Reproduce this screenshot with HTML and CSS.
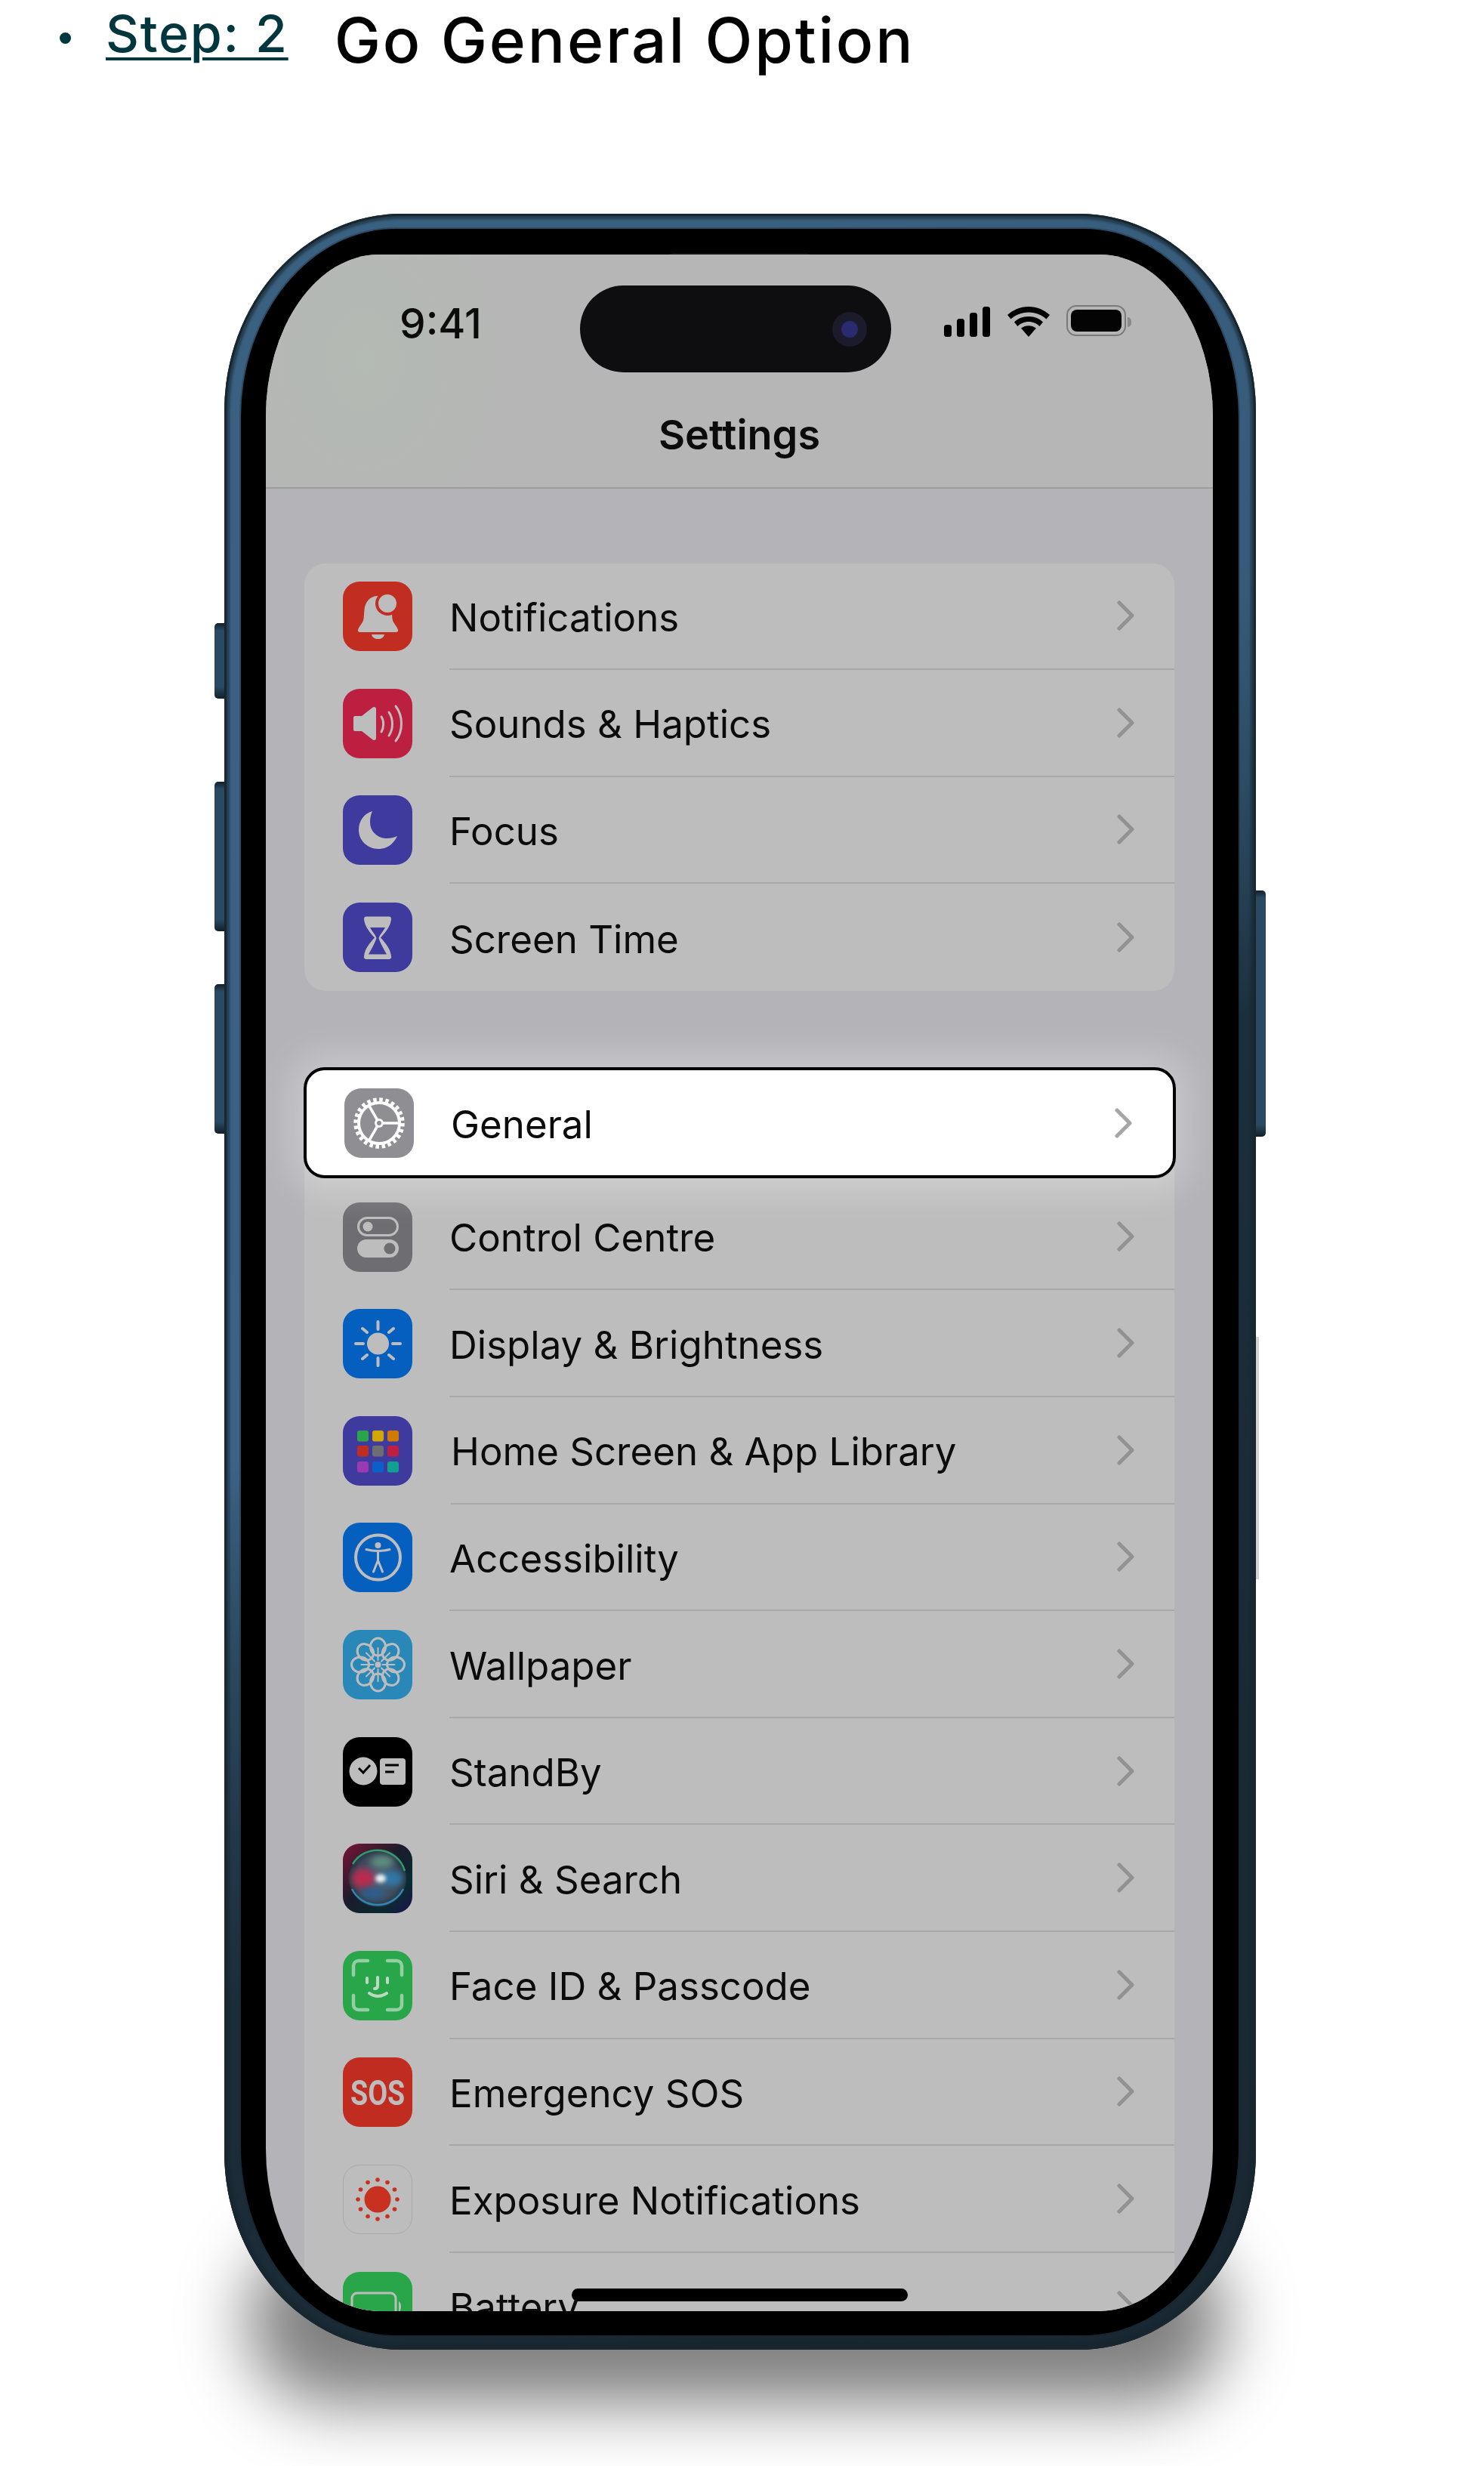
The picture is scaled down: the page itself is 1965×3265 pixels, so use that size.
FILE: index.html
```html
<!DOCTYPE html>
<html lang="en">
<head>
    <meta charset="UTF-8">
    <meta name="viewport" content="width=device-width, initial-scale=1.0">
    <title>Step 2 - Go General Option</title>
    <link rel="stylesheet" href="styles.css">
</head>
<body>

<svg class="defs" width="0" height="0">
    <symbol id="chev" viewBox="0 0 24 40">
        <path d="M3 3 L20 20 L3 37" fill="none" stroke-width="5" stroke-linecap="round" stroke-linejoin="round"/>
    </symbol>
    <radialGradient id="siriBall" cx="50%" cy="50%" r="50%">
        <stop offset="0" stop-color="#54677c"/>
        <stop offset="0.75" stop-color="#3d4a5c"/>
        <stop offset="1" stop-color="#24363f"/>
    </radialGradient>
    <linearGradient id="siriBg" x1="0" y1="0" x2="1" y2="1">
        <stop offset="0" stop-color="#7a1535"/>
        <stop offset="0.45" stop-color="#1b1b2c"/>
        <stop offset="0.75" stop-color="#0a2a30"/>
        <stop offset="1" stop-color="#1d1250"/>
    </linearGradient>
    <filter id="soft" x="-60%" y="-60%" width="220%" height="220%"><feGaussianBlur stdDeviation="4"/></filter>
    <filter id="softer" x="-60%" y="-60%" width="220%" height="220%"><feGaussianBlur stdDeviation="2.500"/></filter>
</svg>

<div class="step-line">
    <span class="bullet"></span>
    <a class="step-link" href="#">Step: 2</a>
    <h1 class="step-title">Go General Option</h1>
</div>

<div class="phone">
    <span class="btn btn-mute"></span>
    <span class="btn btn-up"></span>
    <span class="btn btn-down"></span>
    <span class="btn btn-power"></span>
    <span class="edge-strip"></span>

    <div class="bezel">
        <span class="speaker"></span>
        <div class="screen">

            <div class="nav">
                <div class="status">
                    <span class="time">9:41</span>
                    <div class="island"><span class="camera"></span></div>
                    <div class="status-icons">
                        <svg width="61" height="40" viewBox="0 0 61 40">
                            <rect x="0" y="24" width="10" height="16" rx="3.5"/>
                            <rect x="17" y="16" width="10" height="24" rx="3.5"/>
                            <rect x="34" y="8" width="10" height="32" rx="3.5"/>
                            <rect x="51" y="0" width="10" height="40" rx="3.5"/>
                        </svg>
                        <svg class="wifi" width="56" height="40" viewBox="0 0 56 40">
                            <path d="M28 40 L18 28.5 C24 24 32 24 38 28.5 Z"/>
                            <path d="M28 13 C36 13 43 16 47 20.5 L42.5 26 C39 22.5 34 20 28 20 C22 20 17 22.5 13.500 26 L9 20.500 C13 16 20 13 28 13 Z"/>
                            <path d="M28 0 C39 0 49 4.500 56 11 L51.500 16.500 C45.500 11 37.500 7.500 28 7.500 C18.500 7.500 10.500 11 4.500 16.500 L0 11 C7 4.500 17 0 28 0 Z"/>
                        </svg>
                        <div class="battery"><span class="battery-level"></span></div>
                        <span class="battery-nub"></span>
                    </div>
                </div>
                <div class="nav-title">Settings</div>
            </div>

            <div class="card card-first">
                <div class="row">
                    <span class="icon c-red">
                        <svg viewBox="0 0 92 92">
                            <path class="g" d="M46.500 19 C36 19 29.500 27 28.500 37 L27.500 49 C27 55 21 59 20 64 C19.500 66 21 67 23 67 H70 C72 67 73.500 66 73 64 C72 59 66 55 65.500 49 L64.500 37 C63.500 27 57 19 46.500 19 Z"/>
                            <path class="g" d="M38 70 H55 C54 74 51 76 46.500 76 C42 76 39 74 38 70 Z"/>
                            <circle cx="59" cy="29" r="16" fill="#c12d20"/>
                            <circle class="g" cx="59" cy="29" r="12"/>
                        </svg>
                    </span>
                    <div class="row-body"><span>Notifications</span><svg class="chev"><use href="#chev"/></svg></div>
                </div>
                <div class="row">
                    <span class="icon c-crimson">
                        <svg viewBox="0 0 92 92">
                            <path class="g" d="M16 36 H25 L39 25 C41.500 23 44 24 44 27 V65 C44 68 41.500 69 39 67 L25 56 H16 C14.500 56 14 55 14 54 V38 C14 37 14.500 36 16 36 Z"/>
                            <path class="l" d="M51 37 C54.500 42 54.500 51 51 57"/>
                            <path class="l" d="M61 31 C67 40 67 53 61 62"/>
                            <path class="l" d="M70 23 C80 36 80 56 70 69"/>
                        </svg>
                    </span>
                    <div class="row-body"><span>Sounds &amp; Haptics</span><svg class="chev"><use href="#chev"/></svg></div>
                </div>
                <div class="row">
                    <span class="icon c-indigo">
                        <svg viewBox="0 0 92 92">
                            <path class="g" d="M39 21 C28 24 21 34 21 46 C21 60 33 71 47 71 C58 71 67 65 72 54 C68 56 63 57 58 57 C45 57 36 47 36 36 C36 30 37 25 39 21 Z"/>
                        </svg>
                    </span>
                    <div class="row-body"><span>Focus</span><svg class="chev"><use href="#chev"/></svg></div>
                </div>
                <div class="row row-last">
                    <span class="icon c-indigo">
                        <svg viewBox="0 0 92 92">
                            <path class="g" d="M31 18.500 H61 A3 3 0 0 1 64 22 C63 32 56 40 50 46.500 C56 53 63 61 64 71 A3 3 0 0 1 61 75 H31 A3 3 0 0 1 28 71 C29 61 36 53 42 46.500 C36 40 29 32 28 22 A3 3 0 0 1 31 18.500 Z"/>
                            <path fill="#3f3a9e" d="M36 33 H56 C53 39 49 42 47.500 47 C49 52 53 60 58 68.500 H34 C39 60 43 52 44.500 47 C43 42 39 39 36 33 Z"/>
                        </svg>
                    </span>
                    <div class="row-body"><span>Screen Time</span><svg class="chev"><use href="#chev"/></svg></div>
                </div>
            </div>

            <div class="card card-second">
                <div class="row row-active">
                    <span class="icon c-gray">
                        <svg viewBox="0 0 92 92">
                            <circle cx="46" cy="46" r="30.500" fill="none" stroke="#fff" stroke-width="6.500" stroke-dasharray="4.400 3.585"/>
                            <circle cx="46" cy="46" r="27" fill="none" stroke="#fff" stroke-width="4"/>
                            <circle cx="46" cy="46" r="4.500" fill="none" stroke="#fff" stroke-width="3"/>
                            <path d="M50.500 46 H72 M43.700 42 L33 23.500 M43.700 50 L33 68.500" stroke="#fff" stroke-width="3.500" fill="none"/>
                        </svg>
                    </span>
                    <div class="row-body"><span>General</span><svg class="chev"><use href="#chev"/></svg></div>
                </div>
                <div class="row">
                    <span class="icon c-slate">
                        <svg viewBox="0 0 92 92">
                            <rect x="20.500" y="20.500" width="52" height="23" rx="11.500" fill="none" stroke="#bdbdbd" stroke-width="3"/>
                            <circle class="g" cx="33" cy="32" r="6.500"/>
                            <rect class="g" x="19" y="49" width="55" height="24" rx="12"/>
                            <circle cx="62" cy="61" r="7.500" fill="#6e6e72"/>
                        </svg>
                    </span>
                    <div class="row-body"><span>Control Centre</span><svg class="chev"><use href="#chev"/></svg></div>
                </div>
                <div class="row">
                    <span class="icon c-blue">
                        <svg viewBox="0 0 92 92">
                            <circle class="g" cx="46.500" cy="46" r="14.500"/>
                            <path class="l l4" d="M46.500 17 V27 M46.500 65 V75 M17 46 H27 M66 46 H76 M26 26 L32 31 M67 26 L61 31 M26 66 L32 61 M67 66 L61 61"/>
                        </svg>
                    </span>
                    <div class="row-body"><span>Display &amp; Brightness</span><svg class="chev"><use href="#chev"/></svg></div>
                </div>
                <div class="row row-shift">
                    <span class="icon c-indigo">
                        <svg viewBox="0 0 92 92">
                            <rect x="19" y="19" width="15" height="14.500" rx="3" fill="#2aa64a"/>
                            <rect x="39" y="19" width="15" height="14.500" rx="3" fill="#d0a800"/>
                            <rect x="59" y="19" width="15" height="14.500" rx="3" fill="#d07a00"/>
                            <rect x="19" y="39" width="15" height="14.500" rx="3" fill="#c02c20"/>
                            <rect x="39" y="39" width="15" height="14.500" rx="3" fill="#6e6e72"/>
                            <rect x="59" y="39" width="15" height="14.500" rx="3" fill="#bc1f40"/>
                            <rect x="19" y="60" width="15" height="14.500" rx="3" fill="#9a3ab0"/>
                            <rect x="39" y="60" width="15" height="14.500" rx="3" fill="#0a60c8"/>
                            <rect x="59" y="60" width="15" height="14.500" rx="3" fill="#10a090"/>
                        </svg>
                    </span>
                    <div class="row-body"><span>Home Screen &amp; App Library</span><svg class="chev"><use href="#chev"/></svg></div>
                </div>
                <div class="row">
                    <span class="icon c-blue">
                        <svg viewBox="0 0 92 92">
                            <circle cx="46.500" cy="46" r="29.500" fill="none" stroke="#bdbdbd" stroke-width="4"/>
                            <circle class="g" cx="46.500" cy="30" r="4"/>
                            <path class="l" d="M31 35.500 Q46.500 39.500 62 35.500"/>
                            <path class="l" d="M46.500 38 V50 M46.500 50 L40.500 65 M46.500 50 L52.500 65" stroke-width="3.500"/>
                        </svg>
                    </span>
                    <div class="row-body"><span>Accessibility</span><svg class="chev"><use href="#chev"/></svg></div>
                </div>
                <div class="row">
                    <span class="icon c-sky">
                        <svg viewBox="0 0 92 92">
                            <g class="petals">
                                <ellipse cx="46.500" cy="22.500" rx="10" ry="11.500"/>
                                <ellipse cx="46.500" cy="22.500" rx="10" ry="11.500" transform="rotate(45 46.500 46)"/>
                                <ellipse cx="46.500" cy="22.500" rx="10" ry="11.500" transform="rotate(90 46.500 46)"/>
                                <ellipse cx="46.500" cy="22.500" rx="10" ry="11.500" transform="rotate(135 46.500 46)"/>
                                <ellipse cx="46.500" cy="22.500" rx="10" ry="11.500" transform="rotate(180 46.500 46)"/>
                                <ellipse cx="46.500" cy="22.500" rx="10" ry="11.500" transform="rotate(225 46.500 46)"/>
                                <ellipse cx="46.500" cy="22.500" rx="10" ry="11.500" transform="rotate(270 46.500 46)"/>
                                <ellipse cx="46.500" cy="22.500" rx="10" ry="11.500" transform="rotate(315 46.500 46)"/>
                            </g>
                            <path class="l l2" d="M46.500 24 V40 M46.500 52 V68 M24.500 46 H40.500 M52.500 46 H68.500 M31 30.500 L42 41.500 M62 30.500 L51 41.500 M31 61.500 L42 50.500 M62 61.500 L51 50.500"/>
                            <circle class="g" cx="46.500" cy="46" r="4"/>
                        </svg>
                    </span>
                    <div class="row-body"><span>Wallpaper</span><svg class="chev"><use href="#chev"/></svg></div>
                </div>
                <div class="row">
                    <span class="icon c-black">
                        <svg viewBox="0 0 92 92">
                            <circle class="g" cx="27" cy="45" r="18.500"/>
                            <path d="M21 41 L27 47 L36 37" fill="none" stroke="#000" stroke-width="3"/>
                            <rect class="g" x="49" y="28" width="34" height="35" rx="4"/>
                            <path d="M56 37 H74 M56 46 H68" stroke="#000" stroke-width="3"/>
                        </svg>
                    </span>
                    <div class="row-body"><span>StandBy</span><svg class="chev"><use href="#chev"/></svg></div>
                </div>
                <div class="row">
                    <span class="icon">
                        <svg viewBox="0 0 92 92">
                            <rect width="92" height="92" fill="url(#siriBg)"/>
                            <circle cx="46" cy="46" r="38" fill="url(#siriBall)"/>
                            <path d="M13 27 A38 38 0 0 1 82 36" fill="none" stroke="#2f9a70" stroke-width="2.500"/>
                            <path d="M12 60 A38 38 0 0 0 80 60" fill="none" stroke="#3088b8" stroke-width="2.500"/>
                            <ellipse cx="27" cy="46" rx="15" ry="13" fill="#b82c50" filter="url(#soft)"/>
                            <ellipse cx="65" cy="46" rx="14" ry="10" fill="#2f78a8" filter="url(#soft)"/>
                            <ellipse cx="52" cy="24" rx="15" ry="8" fill="#5f8f80" filter="url(#soft)"/>
                            <ellipse cx="40" cy="66" rx="16" ry="7" fill="#2a5f90" filter="url(#soft)"/>
                            <ellipse cx="50" cy="46" rx="7" ry="5.500" fill="#eef2f4" filter="url(#softer)"/>
                        </svg>
                    </span>
                    <div class="row-body"><span>Siri &amp; Search</span><svg class="chev"><use href="#chev"/></svg></div>
                </div>
                <div class="row">
                    <span class="icon c-green">
                        <svg viewBox="0 0 92 92">
                            <path class="face" d="M14 32 V20 C14 16 17 13 21 13 H33 M59 13 H71 C75 13 78 16 78 20 V32 M14 59 V71 C14 75 17 78 21 78 H33 M59 78 H71 C75 78 78 75 78 71 V59"/>
                            <path class="face-soft" d="M32 36 V42 M59 36 V42 M46 35 V46 C46 49 44 50 42 50 M35 56 Q46 64 58 56"/>
                        </svg>
                    </span>
                    <div class="row-body"><span>Face ID &amp; Passcode</span><svg class="chev"><use href="#chev"/></svg></div>
                </div>
                <div class="row">
                    <span class="icon c-red2"><span class="sos">SOS</span></span>
                    <div class="row-body"><span>Emergency SOS</span><svg class="chev"><use href="#chev"/></svg></div>
                </div>
                <div class="row">
                    <span class="icon c-plain">
                        <svg viewBox="0 0 92 92">
                            <g fill="#c8301f">
                                <circle cx="46" cy="46" r="17.500"/>
                                <circle cx="46" cy="20" r="2.800"/>
                                <circle cx="59" cy="23.500" r="2.800"/>
                                <circle cx="68.500" cy="33" r="2.800"/>
                                <circle cx="72" cy="46" r="2.800"/>
                                <circle cx="68.500" cy="59" r="2.800"/>
                                <circle cx="59" cy="68.500" r="2.800"/>
                                <circle cx="46" cy="72" r="2.800"/>
                                <circle cx="33" cy="68.500" r="2.800"/>
                                <circle cx="23.500" cy="59" r="2.800"/>
                                <circle cx="20" cy="46" r="2.800"/>
                                <circle cx="23.500" cy="33" r="2.800"/>
                                <circle cx="33" cy="23.500" r="2.800"/>
                            </g>
                        </svg>
                    </span>
                    <div class="row-body"><span>Exposure Notifications</span><svg class="chev"><use href="#chev"/></svg></div>
                </div>
                <div class="row">
                    <span class="icon c-green">
                        <svg viewBox="0 0 92 92">
                            <rect x="12" y="28" width="58" height="36" rx="7" fill="none" stroke="#bdbdbd" stroke-width="3"/>
                            <path class="g" d="M74 39 C78 41 78 51 74 53 Z"/>
                        </svg>
                    </span>
                    <div class="row-body"><span>Battery</span><svg class="chev"><use href="#chev"/></svg></div>
                </div>
            </div>

            <span class="home-bar"></span>
        </div>
    </div>
</div>

</body>
</html>
```

FILE: styles.css
```css
html {
    background: #fff;
}
body {
    margin: 0;
    padding-bottom: 154px;
    font-family: Inter, "Liberation Sans", sans-serif;
    color: #0b0b0b;
}
.defs {
    position: absolute;
}

/* heading line */
.step-line {
    display: flex;
    height: 283px;
    box-sizing: border-box;
    padding-left: 79px;
}
.bullet {
    width: 15px;
    height: 15px;
    margin-top: 43px;
    border-radius: 50%;
    background: #00363d;
}
.step-link {
    margin: 0 0 0 46px;
    height: 70px;
    padding-top: 5px;
    font-size: 68px;
    line-height: 78px;
    font-weight: 500;
    letter-spacing: 1.8px;
    color: #00363d;
    text-decoration: underline;
    text-decoration-thickness: 4px;
    text-underline-offset: 7px;
}
.step-title {
    margin: 9px 0 0 61px;
    font-size: 82px;
    line-height: 90px;
    font-weight: 550;
    letter-spacing: 2.8px;
    color: #000;
}

/* phone body */
.phone {
    position: relative;
    width: 1366px;
    height: 2828px;
    box-sizing: border-box;
    margin-left: 297px;
    padding: 20px 23px 19px 22px;
    border-radius: 235px / 262px;
    background: conic-gradient(#3a6080 0deg, #375c7b 35deg, #1c2f3d 62deg, #18262f 180deg, #1c2d3a 215deg, #3a6384 250deg, #3a6080 360deg);
    box-shadow: inset 0 0 0 3px #18262f, inset 0 0 3px 7px rgba(24, 38, 47, 0.6);
}
.phone::after {
    content: "";
    position: absolute;
    z-index: -1;
    left: 30px;
    right: 40px;
    bottom: -72px;
    height: 220px;
    border-radius: 160px;
    background: rgba(0, 0, 0, 0.5);
    filter: blur(45px);
}
.btn {
    position: absolute;
    width: 13px;
    left: -13px;
    border-radius: 5px 0 0 5px;
    background: linear-gradient(to bottom, #12202a, #2a4a62 10px, #2a4a62 calc(100% - 16px), #12202a);
}
.btn-mute { top: 542px; height: 100px; }
.btn-up { top: 752px; height: 198px; }
.btn-down { top: 1020px; height: 198px; }
.btn-power {
    left: auto;
    right: -13px;
    top: 896px;
    height: 326px;
    border-radius: 0 5px 5px 0;
}
.edge-strip {
    position: absolute;
    right: -4px;
    top: 1487px;
    width: 4px;
    height: 321px;
    background: #d4d4d4;
}
.bezel {
    position: relative;
    height: 100%;
    box-sizing: border-box;
    padding: 34px 34px 32px 33px;
    border-radius: 205px / 250px;
    background: #000;
    box-shadow: 0 0 0 2px rgba(24, 38, 47, 0.35);
}
.speaker {
    position: absolute;
    left: 566px;
    top: 32px;
    width: 189px;
    height: 12px;
    border-radius: 6px;
    background: #141414;
}
.screen {
    position: relative;
    height: 100%;
    overflow: hidden;
    border-radius: 150px / 215px;
    background: #b3b3b8;
}

/* top bar */
.nav {
    height: 310px;
    box-sizing: border-box;
    border-bottom: 2px solid #9c9c9c;
    background: radial-gradient(ellipse 220px 280px at 130px 140px, rgba(170, 198, 172, 0.22), transparent), #b6b6b6;
}
.status {
    display: flex;
    padding: 41px 0 0 177px;
}
.time {
    width: 239px;
    margin-top: 17px;
    font-size: 55px;
    line-height: 66px;
    font-weight: 500;
}
.island {
    display: flex;
    align-items: center;
    justify-content: flex-end;
    width: 412px;
    height: 115px;
    box-sizing: border-box;
    padding-right: 32px;
    border-radius: 58px;
    background: #0e0e10;
}
.camera {
    width: 22px;
    height: 22px;
    border: 12px solid #1b1b2b;
    border-radius: 50%;
    background: #2a2a70;
}
.status-icons {
    display: flex;
    align-items: flex-start;
    margin: 28px 0 0 70px;
}
.wifi {
    margin-left: 23px;
}
.battery {
    width: 79px;
    height: 41px;
    box-sizing: border-box;
    margin: -2px 0 0 22px;
    padding: 4px;
    border: 2px solid #7a7a7a;
    border-radius: 13px;
}
.battery-level {
    display: block;
    height: 100%;
    border-radius: 8px;
    background: #040404;
}
.battery-nub {
    width: 5px;
    height: 13px;
    margin: 14px 0 0 2px;
    border-radius: 0 5px 5px 0;
    background: #8a8a8a;
}
.nav-title {
    margin-top: 50px;
    text-align: center;
    font-size: 54px;
    line-height: 66px;
    font-weight: 600;
}

/* settings lists */
.card {
    margin: 0 51px;
    border-radius: 28px;
    background: #bdbdbd;
}
.card-first {
    margin-top: 98.5px;
}
.card-second {
    margin-top: 113.5px;
}
.row {
    display: flex;
    align-items: center;
    height: 141.6px;
    padding-left: 51px;
}
.row-body {
    display: flex;
    flex: 1;
    align-items: center;
    justify-content: space-between;
    height: 100%;
    box-sizing: border-box;
    margin-left: 49px;
    padding-right: 52px;
    border-bottom: 2px solid #a8a8a8;
    font-size: 51px;
}
.row-body span {
    padding-top: 4px;
}
.row-last .row-body {
    border-bottom: none;
}
.row-shift .row-body {
    margin-left: 51px;
}
.row-active {
    position: relative;
    height: 146.500px;
    box-sizing: border-box;
    margin: -12px -2px 7px -1px;
    padding-left: 50px;
    border: 4px solid #000;
    border-radius: 28px;
    background: #fff;
    box-shadow: 0 0 46px 18px rgba(255, 255, 255, 0.28);
}
.row-active .row-body {
    margin-left: 49px;
    padding-right: 53px;
    border-bottom: none;
}
.chev {
    width: 24px;
    height: 40px;
    stroke: #929292;
}
.row-active .chev {
    stroke: #a6a6a6;
}

/* icons */
.icon {
    display: flex;
    flex: none;
    align-items: center;
    justify-content: center;
    width: 92px;
    height: 92px;
    overflow: hidden;
    border-radius: 22px;
}
.icon svg {
    display: block;
    flex: none;
    width: 92px;
    height: 92px;
}
.c-red { background: #c12d20; }
.c-crimson { background: #bc1f40; }
.c-indigo { background: #3f3a9e; }
.c-gray { background: #8e8e93; }
.c-slate { background: #6e6e72; }
.c-blue { background: #055fbe; }
.c-sky { background: #2a88b8; }
.c-black { background: #000; }
.c-green { background: #2aa64a; }
.c-red2 { background: #c02c20; }
.c-plain {
    box-sizing: border-box;
    border: 1.500px solid #a9a9a9;
}
.g {
    fill: #bdbdbd;
}
.l {
    fill: none;
    stroke: #bdbdbd;
    stroke-width: 3;
    stroke-linecap: round;
}
.l4 {
    stroke-width: 4;
}
.l2 {
    stroke-width: 2;
}
.petals {
    fill: none;
    stroke: #bdbdbd;
    stroke-width: 3;
}
.face {
    fill: none;
    stroke: #93cfa2;
    stroke-width: 4.500;
    stroke-linecap: round;
}
.face-soft {
    fill: none;
    stroke: #bdd9c4;
    stroke-width: 4;
    stroke-linecap: round;
}
.sos {
    color: #bdbdbd;
    font-family: Roboto, sans-serif;
    font-weight: 700;
    font-size: 47px;
    line-height: 47px;
    transform: scaleX(0.8);
}
.home-bar {
    position: absolute;
    left: 405px;
    bottom: 13px;
    width: 445px;
    height: 17px;
    border-radius: 9px;
    background: #000;
}
```
